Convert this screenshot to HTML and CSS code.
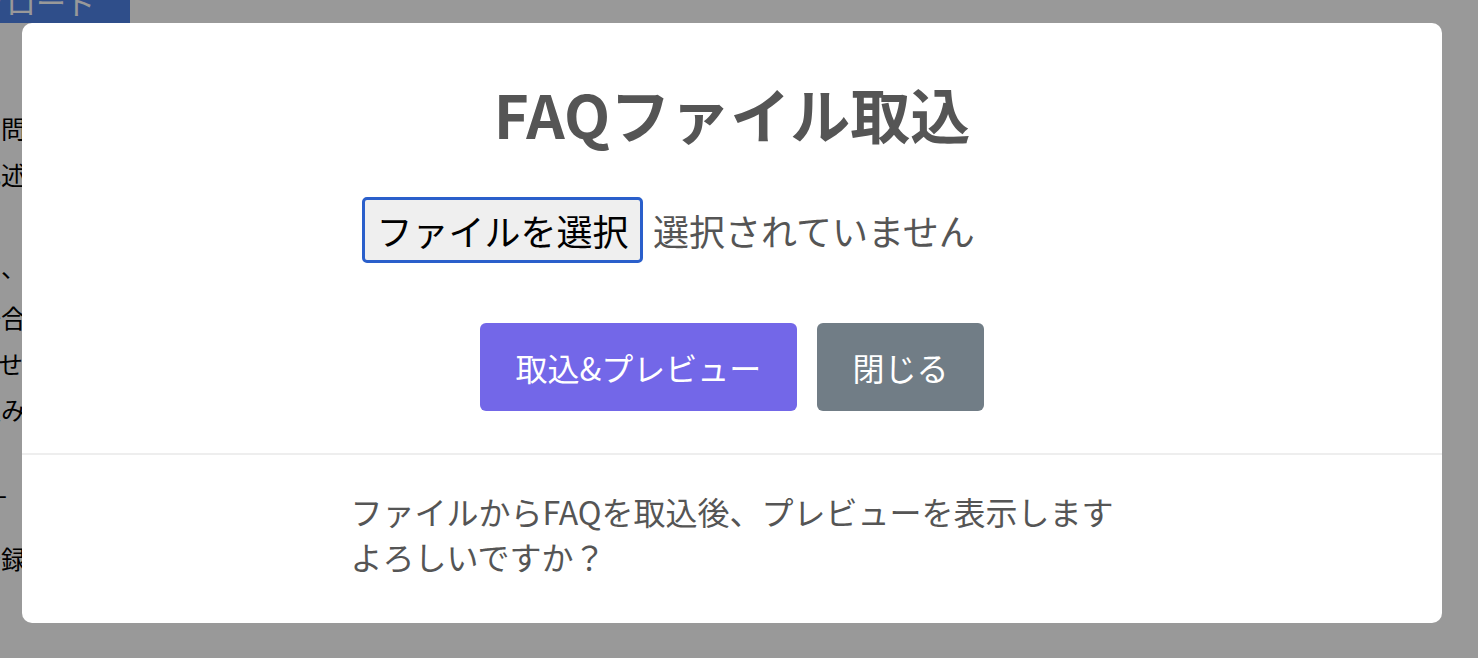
FILE: index.html
```html
<!DOCTYPE html>
<html lang="ja">
<head>
<meta charset="utf-8">
<title>FAQファイル取込</title>
<link rel="stylesheet" href="styles.css">
</head>
<body>
<div class="page">
  <div class="topbar">
    <span class="upload-btn">アップロード</span>
  </div>
  <div class="side-text">
    <div class="line">ご質問</div>
    <div class="line">記述</div>
    <div class="line blank"></div>
    <div class="line">ため、</div>
    <div class="line shift">場合</div>
    <div class="line overflow">ません</div>
    <div class="line">込み</div>
    <div class="line blank"></div>
    <div class="line dash">-</div>
    <div class="line gap">登録</div>
  </div>
</div>

<div class="backdrop">
  <div class="modal">
    <div class="modal-body">
      <h1 class="modal-title">FAQファイル取込</h1>
      <div class="file-input">
        <span class="file-btn">ファイルを選択</span>
        <span class="file-name">選択されていません</span>
      </div>
      <div class="actions">
        <button class="btn btn-primary">取込&amp;プレビュー</button>
        <button class="btn btn-secondary">閉じる</button>
      </div>
    </div>
    <div class="modal-footer">
      <p class="footer-text">ファイルからFAQを取込後、プレビューを表示します<br>よろしいですか？</p>
    </div>
  </div>
</div>
</body>
</html>
```

FILE: styles.css
```css
* {
  box-sizing: border-box;
}

html, body {
  margin: 0;
  padding: 0;
  height: 100%;
}

body {
  background: #ffffff;
  font-family: "Noto Sans CJK JP", "Noto Sans", sans-serif;
  overflow: hidden;
}

/* background page */
.page {
  height: 100%;
}

.topbar {
  display: flex;
  justify-content: flex-end;
  width: 130px;
  height: 23px;
  overflow: hidden;
}

.upload-btn {
  flex: none;
  display: block;
  background: #4f83e6;
  color: #ffffff;
  font-size: 30px;
  line-height: 44px;
  height: 44px;
  margin-top: -21px;
  padding: 0 34px 0 20px;
  white-space: nowrap;
}

.side-text {
  width: 26px;
  margin-top: 82px;
  display: flex;
  flex-direction: column;
}

.line {
  display: flex;
  justify-content: flex-end;
  height: 46px;
  font-size: 25px;
  line-height: 46px;
  color: #000000;
  white-space: nowrap;
}

.line.shift {
  margin-top: 5px;
}

.line.overflow {
  margin-right: -22px;
}

.line.dash {
  padding-right: 19px;
  margin-top: -8px;
}

.line.gap {
  margin-top: 19px;
}

/* overlay */
.backdrop {
  position: fixed;
  inset: 0;
  background: rgba(0, 0, 0, 0.4);
  padding: 23px 36px 35px 22px;
  display: flex;
}

.modal {
  flex: 1;
  background: #ffffff;
  border-radius: 10px;
  display: flex;
  flex-direction: column;
  color: #555555;
}

.modal-body {
  display: flex;
  flex-direction: column;
  align-items: center;
  padding-top: 54px;
  padding-bottom: 42px;
  border-bottom: 2px solid #eeeeee;
}

.modal-title {
  margin: 0;
  font-size: 60px;
  line-height: 72px;
  font-weight: 700;
  color: #555555;
}

.file-input {
  margin-top: 48px;
  width: 740px;
  display: flex;
  align-items: center;
  gap: 10px;
}

.file-btn {
  display: flex;
  align-items: center;
  justify-content: center;
  width: 281px;
  height: 66px;
  background: #efefef;
  border: 3px solid #2a5fcb;
  border-radius: 5px;
  color: #000000;
  font-size: 36px;
  line-height: 1;
  white-space: nowrap;
}

.file-name {
  font-size: 36px;
  line-height: 1;
  color: #555555;
  white-space: nowrap;
}

.actions {
  margin-top: 60px;
  display: flex;
  gap: 20px;
}

.btn {
  height: 88px;
  border: none;
  border-radius: 6px;
  color: #ffffff;
  font-family: inherit;
  font-size: 32px;
  line-height: 1;
  padding: 0 30px;
  white-space: nowrap;
}

.btn-primary {
  width: 317px;
  background: #7367e8;
}

.btn-secondary {
  width: 167px;
  background: #717d86;
}

.modal-footer {
  flex: 1;
  display: flex;
  justify-content: center;
  padding-top: 34px;
}

.footer-text {
  margin: 0;
  font-size: 32px;
  line-height: 45px;
  color: #555555;
  text-align: left;
}
```
